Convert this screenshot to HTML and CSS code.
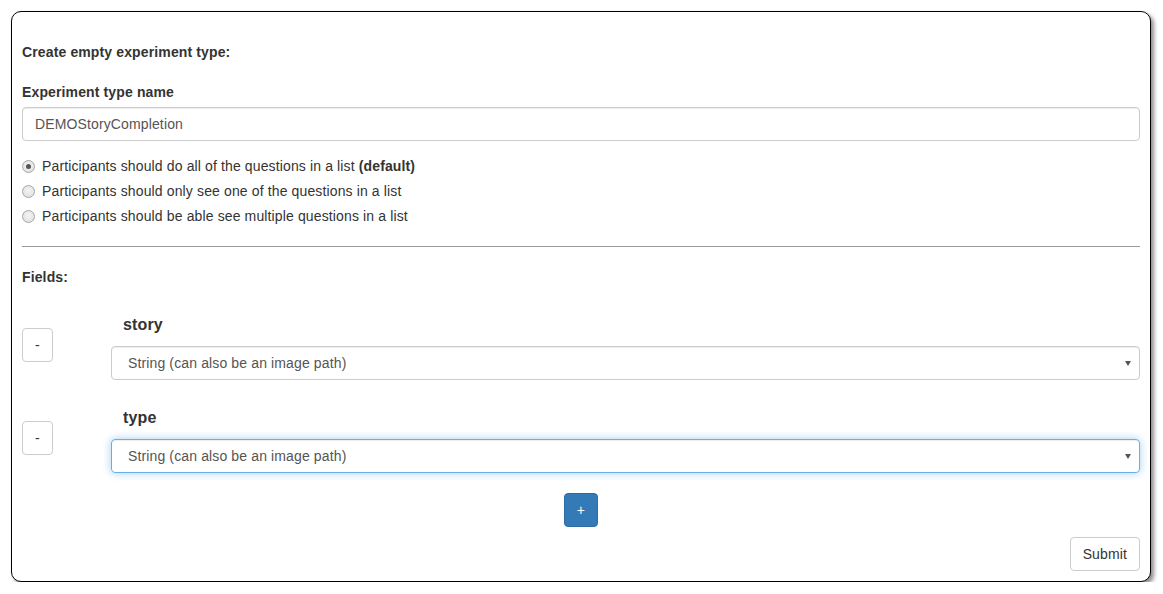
FILE: index.html
```html
<!DOCTYPE html>
<html>
<head>
<meta charset="utf-8">
<link rel="stylesheet" href="styles.css">
</head>
<body>
<div class="card">
  <div class="title">Create empty experiment type:</div>
  <div class="label">Experiment type name</div>
  <div class="input">DEMOStoryCompletion</div>
  <div class="radios">
    <div class="radio"><span class="dot checked"></span><span>Participants should do all of the questions in a list <b>(default)</b></span></div>
    <div class="radio"><span class="dot"></span><span>Participants should only see one of the questions in a list</span></div>
    <div class="radio"><span class="dot"></span><span>Participants should be able see multiple questions in a list</span></div>
  </div>
  <hr class="rule">
  <div class="title">Fields:</div>
  <div class="field">
    <div class="field-btn"><span class="btn">-</span></div>
    <div class="field-main">
      <div class="field-label">story</div>
      <div class="select">String (can also be an image path)<span class="caret"></span></div>
    </div>
  </div>
  <div class="field">
    <div class="field-btn"><span class="btn">-</span></div>
    <div class="field-main">
      <div class="field-label">type</div>
      <div class="select focus">String (can also be an image path)<span class="caret"></span></div>
    </div>
  </div>
  <div class="add-row"><span class="btn primary">+</span></div>
  <div class="submit-row"><span class="btn">Submit</span></div>
</div>
</body>
</html>
```

FILE: styles.css
```css
* { box-sizing: border-box; }
body {
  margin: 0;
  background: #fff;
  font-family: "Liberation Sans", Arial, sans-serif;
  font-size: 14px;
  line-height: 20px;
  letter-spacing: 0.13px;
  color: #333;
}
.card {
  margin: 11px 0 0 11px;
  width: 1140px;
  border: 1px solid #000;
  border-radius: 10px;
  box-shadow: 3px 3px 4px rgba(0,0,0,0.45);
  padding: 30px 10px 10px 10px;
  background: #fff;
}
.title {
  font-weight: bold;
  height: 20px;
}
.label {
  font-weight: bold;
  margin-top: 20px;
  margin-bottom: 5px;
}
.input {
  height: 34px;
  border: 1px solid #ccc;
  border-radius: 4px;
  padding: 6px 12px;
  color: #555;
  box-shadow: inset 0 1px 1px rgba(0,0,0,0.075);
}
.radios {
  margin-top: 15px;
  display: flex;
  flex-direction: column;
  gap: 5px;
}
.radio {
  display: flex;
  align-items: center;
  height: 20px;
}
.dot {
  width: 13px;
  height: 13px;
  border-radius: 50%;
  border: 1px solid #a6a6a6;
  background: radial-gradient(circle at 50% 40%, #f4f4f4 0%, #dcdcdc 100%);
  margin-right: 7px;
  position: relative;
  flex: none;
}
.dot.checked::after {
  content: "";
  position: absolute;
  left: 3px;
  top: 3px;
  width: 5px;
  height: 5px;
  border-radius: 50%;
  background: #555;
}
.rule {
  margin: 20px 0;
  border: 0;
  border-top: 1px solid #999;
  height: 0;
}
.field {
  display: flex;
  align-items: center;
  margin-top: 27px;
}
.field-btn {
  width: 89px;
  flex: none;
  padding-bottom: 4px;
}
.field-main {
  flex: 1;
}
.field-label {
  font-weight: bold;
  font-size: 16px;
  line-height: 22px;
  padding-left: 12px;
  margin-bottom: 10px;
}
.select {
  position: relative;
  height: 34px;
  border: 1px solid #ccc;
  border-radius: 4px;
  padding: 6px 16px;
  color: #555;
  box-shadow: inset 0 1px 1px rgba(0,0,0,0.075);
}
.select.focus {
  border-color: #66afe9;
  box-shadow: inset 0 1px 1px rgba(0,0,0,0.075), 0 0 8px rgba(102,175,233,0.6);
}
.caret {
  position: absolute;
  right: 8px;
  top: 14px;
  width: 0;
  height: 0;
  border-left: 3px solid transparent;
  border-right: 3px solid transparent;
  border-top: 5px solid #555;
}
.btn {
  display: inline-block;
  height: 34px;
  padding: 6px 12px;
  border: 1px solid #ccc;
  border-radius: 4px;
  background: #fff;
  color: #333;
  line-height: 20px;
  text-align: center;
}
.btn.primary {
  background: #337ab7;
  border-color: #2e6da4;
  color: #fff;
}
.add-row {
  margin-top: 20px;
  display: flex;
  justify-content: center;
}
.submit-row {
  margin-top: 10px;
  display: flex;
  justify-content: flex-end;
}
```
